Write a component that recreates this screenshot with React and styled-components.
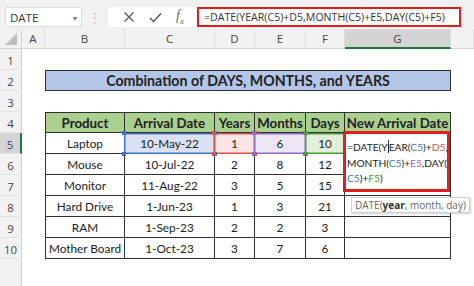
import React from "react";
import styled, { createGlobalStyle, css } from "styled-components";

const GlobalStyle = createGlobalStyle`
  html, body {
    margin: 0;
    padding: 0;
    background: #ffffff;
    overflow: hidden;
  }
  body {
    font-family: "Open Sans", "Liberation Sans", sans-serif;
  }
`;

const columns = ["A", "B", "C", "D", "E", "F", "G", ""];

const products = [
  ["Laptop", "10-May-22", 1, 6, 10],
  ["Mouse", "10-Jul-22", 2, 8, 12],
  ["Monitor", "11-Aug-22", 3, 5, 15],
  ["Hard Drive", "1-Jun-23", 1, 3, 21],
  ["RAM", "1-Sep-23", 2, 2, 3],
  ["Mother Board", "1-Oct-23", 3, 7, 6],
];

const headings = ["Product", "Arrival Date", "Years", "Months", "Days", "New Arrival Date"];

// reference colours excel uses while editing the formula
const refColors = {
  C: { line: "#4472c4", fill: "#d9e1f2" },
  D: { line: "#d9534f", fill: "#fbe4e4" },
  E: { line: "#8e6bbf", fill: "#ece6f5" },
  F: { line: "#4e9a3a", fill: "#e2efda" },
};

export default function App() {
  return (
    <>
      <GlobalStyle />
      <Toolbar>
        <NameBox>
          DATE
          <Caret>▾</Caret>
        </NameBox>
        <Grip>⋮</Grip>
        <FxGroup>
          <svg width="12" height="12" viewBox="0 0 12 12">
            <path d="M1.5 1.5 L10.5 10.5 M10.5 1.5 L1.5 10.5" stroke="#555" strokeWidth="1.3" fill="none" />
          </svg>
          <svg width="13" height="11" viewBox="0 0 13 11">
            <path d="M1 6 L4.5 9.5 L12 1.5" stroke="#555" strokeWidth="1.4" fill="none" />
          </svg>
          <Fx>
            f<sub>x</sub>
          </Fx>
        </FxGroup>
        <FormulaBox>=DATE(YEAR(C5)+D5,MONTH(C5)+E5,DAY(C5)+F5)</FormulaBox>
      </Toolbar>

      <Sheet>
        <Corner>
          <svg width="12" height="12" viewBox="0 0 12 12">
            <polygon points="12,0 12,12 0,12" fill="#bdbdbd" />
          </svg>
        </Corner>
        {columns.map((c, i) => (
          <ColHead key={i} $active={c === "G"}>
            {c}
          </ColHead>
        ))}

        {Array.from({ length: 10 }, (_, i) => (
          <RowHead key={i} $row={i + 2} $active={i + 1 === 5}>
            {i + 1}
          </RowHead>
        ))}
        <RowHead $row={12} />

        <Banner>Combination of DAYS, MONTHS, and YEARS</Banner>

        {headings.map((h, i) => (
          <HeadCell key={h} $col={i + 3} $first={i === 0}>
            {h}
          </HeadCell>
        ))}

        {products.map((p, r) =>
          p.map((v, c) => {
            const letter = "BCDEF"[c];
            const ref = r === 0 ? refColors[letter] : null;
            return (
              <Cell key={r + "-" + c} $row={r + 6} $col={c + 3} $first={c === 0} $ref={ref}>
                {v}
                {ref && (
                  <>
                    <Handle $c={ref.line} $top $left />
                    <Handle $c={ref.line} $top />
                    <Handle $c={ref.line} $left />
                    <Handle $c={ref.line} />
                  </>
                )}
              </Cell>
            );
          })
        )}

        {products.map((_, r) => (
          <Cell key={"g" + r} $row={r + 6} $col={8}>
            {r === 0 && (
              <>
                <Editor>
                  =DATE(Y<Cursor />EAR(<Ref $c="#4472c4">C5</Ref>)+<Ref $c="#d9534f">D5</Ref>,
                  <br />
                  MONTH(<Ref $c="#4472c4">C5</Ref>)+<Ref $c="#8e6bbf">E5</Ref>,DAY(
                  <br />
                  <Ref $c="#4472c4">C5</Ref>)+<Ref $c="#4e9a3a">F5</Ref>)
                </Editor>
                <Tip>
                  DATE(<b>year</b>, month, day)
                </Tip>
              </>
            )}
          </Cell>
        ))}
      </Sheet>
    </>
  );
}

const Toolbar = styled.div`
  height: 29px;
  box-sizing: border-box;
  padding: 7px 0 2px 5px;
  background: #f1f1f1;
  display: flex;
  align-items: stretch;
`;

const NameBox = styled.div`
  width: 77px;
  box-sizing: border-box;
  background: #fff;
  border: 1px solid #dcdcdc;
  display: flex;
  align-items: center;
  justify-content: space-between;
  padding: 0 4px 0 4px;
  font-size: 11.5px;
  color: #333;
`;

const Caret = styled.span`
  font-size: 8px;
  color: #777;
`;

const Grip = styled.div`
  width: 26px;
  display: flex;
  align-items: center;
  justify-content: center;
  color: #c4c4c4;
  font-size: 12px;
`;

const FxGroup = styled.div`
  width: 89px;
  background: #fff;
  display: flex;
  align-items: center;
  justify-content: space-around;
  padding: 0 6px 0 8px;
  box-sizing: border-box;
`;

const Fx = styled.span`
  font-family: "Liberation Serif", serif;
  font-style: italic;
  font-size: 14px;
  color: #666;
  sub {
    font-size: 9px;
  }
`;

const FormulaBox = styled.div`
  width: 264px;
  box-sizing: border-box;
  background: #fff;
  border: 2px solid #e11d1d;
  display: flex;
  align-items: center;
  padding-left: 5px;
  font-size: 10.6px;
  color: #333;
  white-space: nowrap;
  overflow: hidden;
`;

const Sheet = styled.div`
  display: grid;
  grid-template-columns: 22px 23px 80px 90px 40px 51px 39px 106px 1fr;
  grid-template-rows: 20px repeat(10, 21px) 1fr;
  height: calc(100vh - 29px);
  font-family: Lato, "Open Sans", sans-serif;
`;

const headerBase = css`
  background: #f2f2f2;
  display: flex;
  align-items: center;
  justify-content: center;
  font-family: "Open Sans", "Liberation Sans", sans-serif;
  font-size: 11.5px;
  color: #444;
  box-sizing: border-box;
`;

const Corner = styled.div`
  ${headerBase};
  grid-row: 1;
  grid-column: 1;
  align-items: flex-end;
  justify-content: flex-end;
  padding: 0 4px 3px 0;
  border-right: 1px solid #d6d6d6;
  border-bottom: 1px solid #d6d6d6;
`;

const ColHead = styled.div`
  ${headerBase};
  grid-row: 1;
  border-right: 1px solid #dedede;
  border-bottom: 1px solid #d6d6d6;
  ${(p) =>
    p.$active &&
    css`
      background: #d4d4d4;
      border-bottom: 2px solid #217346;
    `}
`;

const RowHead = styled.div`
  ${headerBase};
  grid-row: ${(p) => p.$row};
  grid-column: 1;
  padding-top: 3px;
  border-right: 1px solid #d0d0d0;
  border-bottom: ${(p) => (p.$row === 12 ? "none" : "1px solid #e2e2e2")};
  ${(p) =>
    p.$active &&
    css`
      background: #d4d4d4;
      border-right: 2px solid #217346;
    `}
`;

const cellBase = css`
  box-sizing: border-box;
  display: flex;
  align-items: center;
  justify-content: center;
  border-right: 1px solid #2f2f2f;
  border-bottom: 1px solid #2f2f2f;
  color: #222;
`;

const Banner = styled.div`
  ${cellBase};
  grid-row: 3;
  grid-column: 3 / 9;
  background: #b4c6e7;
  border: 1px solid #2f2f2f;
  font-weight: 700;
  font-size: 14.2px;
`;

const HeadCell = styled.div`
  ${cellBase};
  grid-row: 5;
  grid-column: ${(p) => p.$col};
  background: #a9d08e;
  border-top: 1px solid #2f2f2f;
  border-left: ${(p) => (p.$first ? "1px solid #2f2f2f" : "none")};
  font-weight: 700;
  font-size: 13.3px;
  white-space: nowrap;
`;

const Cell = styled.div`
  ${cellBase};
  position: relative;
  grid-row: ${(p) => p.$row};
  grid-column: ${(p) => p.$col};
  border-left: ${(p) => (p.$first ? "1px solid #2f2f2f" : "none")};
  font-size: 11.8px;
  white-space: nowrap;
  ${(p) =>
    p.$ref &&
    css`
      background: ${p.$ref.fill};
      border: 1px solid ${p.$ref.line};
      box-shadow: inset 0 0 0 0.5px ${p.$ref.line};
      margin-left: -1px;
    `}
`;

const Handle = styled.span`
  position: absolute;
  width: 4px;
  height: 4px;
  background: ${(p) => p.$c};
  ${(p) => (p.$top ? "top: -3px;" : "bottom: -3px;")}
  ${(p) => (p.$left ? "left: -3px;" : "right: -3px;")}
  z-index: 2;
`;

const Editor = styled.div`
  position: absolute;
  top: -2px;
  left: -2px;
  width: 107px;
  height: 61px;
  box-sizing: border-box;
  background: #fff;
  border: 3px solid #e11d1d;
  padding: 6px 0 0 1px;
  font-size: 10.2px;
  line-height: 15.5px;
  color: #222;
  text-align: left;
  white-space: nowrap;
  z-index: 3;
`;

const Cursor = styled.span`
  display: inline-block;
  width: 0;
  height: 13px;
  border-left: 1px solid #333;
  vertical-align: -2px;
`;

const Ref = styled.span`
  color: ${(p) => p.$c};
`;

const Tip = styled.div`
  position: absolute;
  top: 64px;
  left: 6px;
  height: 16px;
  box-sizing: border-box;
  padding: 0 3px;
  background: #fff;
  border: 1px solid #cfcfcf;
  box-shadow: 1px 1px 2px rgba(0, 0, 0, 0.18);
  font-family: "Open Sans", "Liberation Sans", sans-serif;
  font-size: 10px;
  line-height: 14px;
  color: #666;
  white-space: nowrap;
  z-index: 3;
  b {
    color: #333;
  }
`;
